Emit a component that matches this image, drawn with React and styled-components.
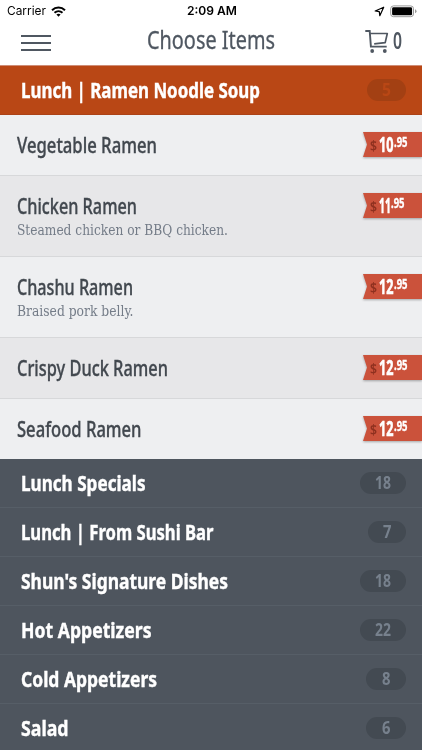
import { useLayoutEffect, useRef } from 'react';
import styled, { createGlobalStyle } from 'styled-components';

const items = [
  { name: 'Vegetable Ramen', width: 140, height: 61, price: '10' },
  {
    name: 'Chicken Ramen',
    width: 120,
    height: 81,
    price: '11',
    note: 'Steamed chicken or BBQ chicken.',
    noteWidth: 211,
  },
  {
    name: 'Chashu Ramen',
    width: 116,
    height: 81,
    price: '12',
    note: 'Braised pork belly.',
    noteWidth: 116.5,
  },
  { name: 'Crispy Duck Ramen', width: 151, height: 61, price: '12' },
  { name: 'Seafood Ramen', width: 124.5, height: 60, price: '12' },
];

const categories = [
  { name: 'Lunch Specials', width: 124.5, count: 18, pill: 46 },
  { name: 'Lunch | From Sushi Bar', width: 192.5, count: 7, pill: 38 },
  { name: "Shun's Signature Dishes", width: 207, count: 18, pill: 46 },
  { name: 'Hot Appetizers', width: 130.5, count: 22, pill: 46 },
  { name: 'Cold Appetizers', width: 136, count: 8, pill: 40 },
  { name: 'Salad', width: 47.5, count: 6, pill: 40 },
];

// Squeezes a line of text to the given width, like a condensed face
const FitText = ({ width, children }) => {
  const ref = useRef(null);

  useLayoutEffect(() => {
    const el = ref.current;
    el.style.transform = `scaleX(${width / el.getBoundingClientRect().width})`;
    return () => {
      el.style.transform = '';
    };
  }, [width, children]);

  return (
    <FitBox $width={width}>
      <FitInner ref={ref}>{children}</FitInner>
    </FitBox>
  );
};

const App = () => {
  return (
    <Screen>
      <GlobalStyle />
      <StatusBar>
        <StatusLeft>
          <FitText width={39}>Carrier</FitText>
          <svg width="15" height="11" viewBox="0 0 15 11" fill="none" stroke="#000">
            <path d="M1 4.3C4.7.7 10.3.7 14 4.3" strokeWidth="2" />
            <path d="M3.5 6.8c2.3-2.1 5.7-2.1 8 0" strokeWidth="1.9" />
            <path d="M5.4 8.5c1.2-1 3-1 4.2 0l-2.1 2.2z" fill="#000" stroke="none" />
          </svg>
        </StatusLeft>
        <Clock>
          <FitText width={50}>2:09 AM</FitText>
        </Clock>
        <StatusRight>
          <svg width="11" height="11" viewBox="0 0 11 11" fill="none" stroke="#000">
            <path d="M9.7 1.2 1.2 5l4.1.6.5 4.1z" strokeWidth="1.2" strokeLinejoin="round" />
          </svg>
          <svg width="27" height="13" viewBox="0 0 27 13">
            <rect x=".7" y=".9" width="22.8" height="10.8" rx="2.8" fill="none" stroke="#999" />
            <rect x="2.1" y="2.3" width="20" height="8" rx="1.4" />
            <path d="M25 4.3q1.5.6 1.5 2T25 8.3z" fill="#999" />
          </svg>
        </StatusRight>
      </StatusBar>

      <NavBar>
        <MenuButton aria-label="Menu">
          <MenuLine />
          <MenuLine />
          <MenuLine />
        </MenuButton>
        <Title>
          <FitText width={128}>Choose Items</FitText>
        </Title>
        <Cart>
          <svg width="25" height="25" viewBox="0 0 25 25" fill="none" stroke="#4f5761">
            <path d="M.3 2h4.4l1.2 15.6h15.8" strokeWidth="1.9" />
            <path d="M5.2 4.5h17.1l-2.1 9.1-11 1.3" strokeWidth="1.7" strokeLinejoin="round" />
            <circle cx="7.2" cy="22" r="1.9" fill="#4f5761" stroke="none" />
            <circle cx="19.8" cy="22" r="1.9" fill="#4f5761" stroke="none" />
          </svg>
          <CartCount>
            <FitText width={9}>0</FitText>
          </CartCount>
        </Cart>
      </NavBar>

      <CategoryRow $active>
        <FitText width={239}>Lunch | Ramen Noodle Soup</FitText>
        <Pill $active $width={39}>
          <FitText width={9}>5</FitText>
        </Pill>
      </CategoryRow>

      {items.map((item, i) => (
        <ItemRow key={item.name} $height={item.height} $shaded={i % 2 === 1}>
          <ItemText>
            <ItemName>
              <FitText width={item.width}>{item.name}</FitText>
            </ItemName>
            {item.note && (
              <ItemNote>
                <FitText width={item.noteWidth}>{item.note}</FitText>
              </ItemNote>
            )}
          </ItemText>
          <Ribbon>
            <RibbonShape>
              <Dollar>
                <FitText width={7}>$</FitText>
              </Dollar>
              <Whole>
                <FitText width={item.price === '11' ? 12 : 14.5}>{item.price}</FitText>
              </Whole>
              <Cents>
                <FitText width={13.5}>.95</FitText>
              </Cents>
            </RibbonShape>
          </Ribbon>
        </ItemRow>
      ))}

      {categories.map((category) => (
        <CategoryRow key={category.name}>
          <FitText width={category.width}>{category.name}</FitText>
          <Pill $width={category.pill}>
            <FitText width={category.count > 9 ? 16 : 8.5}>{category.count}</FitText>
          </Pill>
        </CategoryRow>
      ))}
    </Screen>
  );
};

export default App;

const GlobalStyle = createGlobalStyle`
  * {
    box-sizing: border-box;
  }
  body {
    margin: 0;
    overflow: hidden;
    background: #4e555e;
  }
`;

const Screen = styled.main`
  width: 422px;
  height: 750px;
  overflow: hidden;
  background: #4e555e;
  font-family: 'Noto Sans', 'Open Sans', sans-serif;
`;

const FitBox = styled.span`
  display: block;
  flex: none;
  width: ${(props) => props.$width}px;
  white-space: nowrap;
`;

const FitInner = styled.span`
  display: inline-block;
  transform-origin: 0 50%;
`;

const StatusBar = styled.div`
  display: grid;
  grid-template-columns: 1fr 50px 1fr;
  align-items: center;
  height: 22px;
  padding: 0 5px 0 7px;
  background: #fff;
  color: #000;
  font-family: Inter, sans-serif;
  font-size: 12px;
  line-height: 22px;
`;

const StatusLeft = styled.div`
  display: flex;
  align-items: center;
  gap: 5px;
`;

const Clock = styled.div`
  font-weight: 600;
`;

const StatusRight = styled.div`
  display: flex;
  align-items: center;
  justify-content: flex-end;
  gap: 5px;
`;

const NavBar = styled.header`
  display: grid;
  grid-template-columns: 126px 1fr auto;
  height: 44px;
  padding: 0 20px 0 21px;
  background: #fff;
  border-bottom: 1px solid #cf8d76;
  color: #4f5761;
`;

const MenuButton = styled.button`
  display: flex;
  flex-direction: column;
  gap: 5px;
  width: 30px;
  height: 30px;
  margin-top: 13px;
  padding: 0;
  border: none;
  background: none;
`;

const MenuLine = styled.span`
  height: 2px;
  flex: none;
  width: 30px;
  background: #4f5761;
`;

const Title = styled.h1`
  margin: 0;
  font-size: 25px;
  font-weight: 400;
  line-height: 35px;
  -webkit-text-stroke: 0.3px #4f5761;
`;

const Cart = styled.div`
  display: flex;
  gap: 3px;
  padding-top: 7px;
`;

const CartCount = styled.span`
  font-size: 23px;
  font-weight: 600;
  line-height: 23px;
`;

const CategoryRow = styled.div`
  display: flex;
  align-items: center;
  justify-content: space-between;
  height: 49px;
  padding: 0 16px 0 21px;
  background: ${(props) => (props.$active ? '#b94715' : '#4e555e')};
  border-bottom: 1px solid ${(props) => (props.$active ? '#ab4217' : '#565e67')};
  color: #fff;
  font-size: 21px;
  font-weight: 700;
  line-height: 30px;
  -webkit-text-stroke: 0.4px #fff;
`;

const Pill = styled.span`
  display: flex;
  align-items: center;
  justify-content: center;
  width: ${(props) => props.$width}px;
  height: 22px;
  border-radius: 11px;
  background: ${(props) => (props.$active ? '#a34013' : '#434a52')};
  color: ${(props) => (props.$active ? '#b94715' : '#77818d')};
  font-size: 17px;
  font-weight: 700;
  line-height: 22px;
  -webkit-text-stroke: 0;
`;

const ItemRow = styled.div`
  display: flex;
  justify-content: space-between;
  height: ${(props) => props.$height}px;
  padding-left: 17px;
  background: ${(props) => (props.$shaded ? '#e7e7e9' : '#eeeff1')};
  border-bottom: 1px solid #d7d8da;

  &:nth-of-type(7) {
    border-bottom: none;
  }
`;

const ItemText = styled.div`
  padding-top: 15px;
`;

const ItemName = styled.div`
  color: #42484f;
  font-size: 21px;
  font-weight: 500;
  line-height: 30px;
  -webkit-text-stroke: 0.35px #42484f;
`;

const ItemNote = styled.div`
  color: #747c88;
  font-family: 'DejaVu Serif Condensed', 'DejaVu Serif', serif;
  font-size: 14px;
  line-height: 18px;
`;

const Ribbon = styled.div`
  margin-top: 17px;
  height: 26px;
  filter: drop-shadow(0 1px 1px rgba(0, 0, 0, 0.3));
`;

const RibbonShape = styled.div`
  display: flex;
  width: 59px;
  height: 25px;
  padding-left: 7px;
  background: #cb523b;
  clip-path: polygon(0 0, 100% 0, 100% 100%, 0 100%, 4px 50%);
  font-weight: 700;
`;

const Dollar = styled.span`
  margin-right: 2px;
  color: #8e301f;
  font-size: 15px;
  font-weight: 600;
  line-height: 26px;
`;

const Whole = styled.span`
  color: #fff;
  font-size: 21px;
  line-height: 25px;
  -webkit-text-stroke: 0.6px #fff;
`;

const Cents = styled.span`
  color: #fff;
  font-size: 14px;
  line-height: 20px;
  -webkit-text-stroke: 0.4px #fff;
`;
